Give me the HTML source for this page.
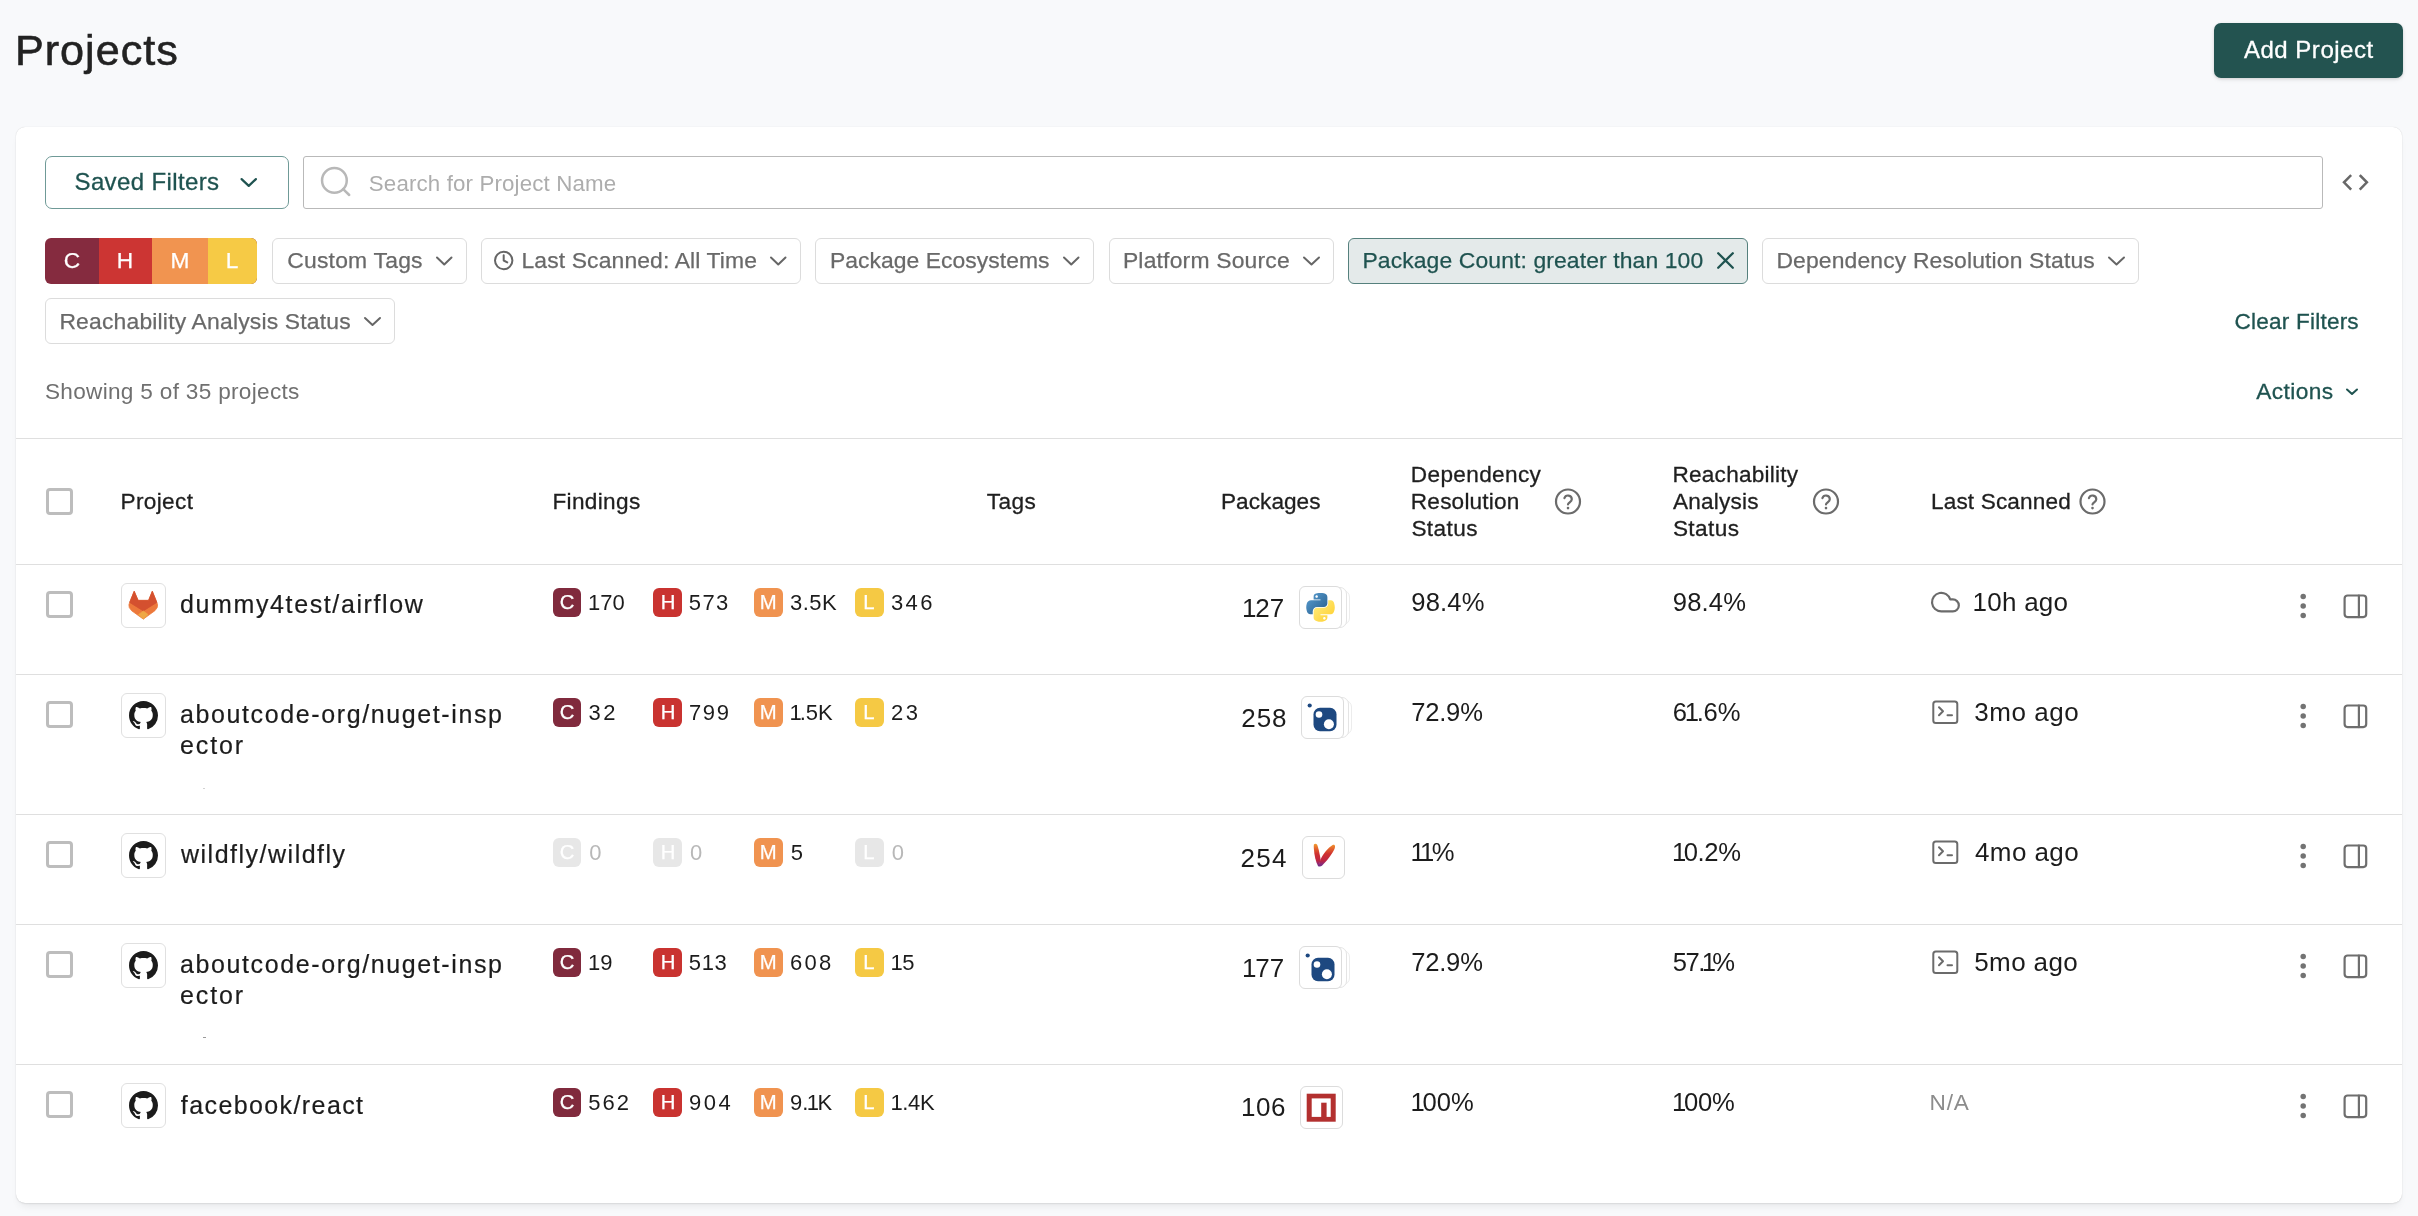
<!DOCTYPE html>
<html lang="en">
<head>
<meta charset="utf-8">
<title>Projects</title>
<style>
html,body{margin:0;padding:0;background:#f8f9fb;}
body{width:2418px;height:1216px;overflow:hidden;position:relative;font-family:"Liberation Sans",sans-serif;}
#root{position:absolute;left:0;top:0;width:2418px;height:1216px;overflow:hidden;background:#f8f9fb;will-change:transform;}
#root div,#root span,#root svg.a{position:absolute;}
.t{white-space:pre;font-family:"Liberation Sans",sans-serif;font-weight:400;}
#root .t span{position:static;}
.chip{box-sizing:border-box;border:1px solid #dcdcdc;border-radius:6px;background:#fff;top:238px;height:46px;}
.line{left:16px;width:2386px;height:1px;background:#dfdfdf;}
</style>
</head>
<body>
<div id="root">
<!-- card -->
<div style="left:16px;top:127px;width:2386px;height:1076px;background:#fff;border-radius:9px;box-shadow:0 0 1px rgba(0,0,0,0.18),0 1px 2px rgba(0,0,0,0.06),0 6px 10px -4px rgba(0,0,0,0.09)"></div>
<!-- add project -->
<div style="left:2214px;top:23px;width:189px;height:55px;background:#235350;border-radius:7px;box-shadow:0 1px 3px rgba(0,0,0,0.12),0 2px 5px rgba(0,0,0,0.06)"></div>
<!-- saved filters -->
<div style="left:45px;top:156px;width:244px;height:53px;box-sizing:border-box;border:1px solid #6f9a97;border-radius:7px;background:#fff"></div>
<!-- search -->
<div style="left:303px;top:156px;width:2020px;height:53px;box-sizing:border-box;border:1px solid #b9b9b9;border-radius:3px;background:#fff"></div>
<svg class="a" style="left:318px;top:164px" width="36" height="36" viewBox="0 0 36 36"><g fill="none" stroke="#b8b8b8" stroke-width="2.5" stroke-linecap="round"><circle cx="16.4" cy="16.4" r="12.35"/><path d="M25.2 25.2l6 5.8"/></g></svg>
<!-- code icon -->
<svg class="a" style="left:2340px;top:170px" width="32" height="26" viewBox="0 0 32 26"><g fill="none" stroke="#686868" stroke-width="2.5" stroke-linecap="square" stroke-linejoin="miter"><path d="M10.3 5.9L4 12.3L10.3 18.8"/><path d="M20.6 5.9L26.9 12.3L20.6 18.8"/></g></svg>
<!-- severity filter -->
<div style="left:45px;top:238px;width:212px;height:46px;border-radius:6px;overflow:hidden;background:#852b3f">
<div style="left:54px;top:0;width:53px;height:46px;background:#cc3533"></div>
<div style="left:107px;top:0;width:56px;height:46px;background:#f19450"></div>
<div style="left:163px;top:0;width:49px;height:46px;background:#f6ca45"></div>
</div>
<!-- chips -->
<div class="chip" style="left:272px;width:195px"></div>
<div class="chip" style="left:481px;width:320px"></div>
<div class="chip" style="left:815px;width:279px"></div>
<div class="chip" style="left:1109px;width:225px"></div>
<div class="chip" style="left:1348px;width:400px;background:#e4eaea;border-color:#55807d"></div>
<div class="chip" style="left:1762px;width:377px"></div>
<div class="chip" style="left:45px;top:298px;width:350px"></div>
<!--CHEVRONS-->
<!-- lines -->
<div class="line" style="top:438px"></div>
<div class="line" style="top:564px"></div>
<div class="line" style="top:674px"></div>
<div class="line" style="top:814px"></div>
<div class="line" style="top:924px"></div>
<div class="line" style="top:1064px"></div>
<!-- header checkbox -->
<div style="left:46px;top:487.5px;width:27px;height:27px;border:3px solid #bdbdbd;border-radius:4px;box-sizing:border-box;background:#fff"></div>
<div style="left:203px;top:788px;width:2px;height:1px;background:#d2d2d2"></div>
<div style="left:203px;top:1037px;width:3px;height:1px;background:#9a9a9a"></div>
<div style="left:46px;top:590.5px;width:27px;height:27px;border:3px solid #bdbdbd;border-radius:4px;box-sizing:border-box;background:#fff"></div>
<div style="left:121px;top:583.0px;width:45px;height:45px;border:1px solid #e0e0e0;border-radius:6px;box-sizing:border-box;background:#fff"><svg style="position:absolute;left:-1px;top:-1px" width="45" height="45" viewBox="0 0 45 45"><polygon fill="#ec783b" stroke="#ec783b" stroke-width="0.8" stroke-linejoin="round" points="13.2,8.3 17.1,17.4 27.6,17.4 31.3,8.3 35.8,19.4 36.6,21.8 36.2,24.6 33.9,27.7 22.3,36.1 10.6,27.7 8.3,24.6 7.9,21.8 8.7,19.4"/><polygon fill="#d4502f" stroke="#d4502f" stroke-width="0.8" stroke-linejoin="round" points="13.2,8.3 17.1,17.4 27.6,17.4 31.3,8.3 35.8,19.4 22.3,27.9 8.7,19.4"/><polygon fill="#efa844" stroke="#efa844" stroke-width="0.6" stroke-linejoin="round" points="22.3,27.9 27.1,31.6 22.3,36.1 17.5,31.6"/></svg></div>
<div style="left:553px;top:588.0px;width:28px;height:29px;background:#802a3d;border-radius:6px"></div>
<div style="left:653px;top:588.0px;width:28.5px;height:29px;background:#c93330;border-radius:6px"></div>
<div style="left:754px;top:588.0px;width:28.5px;height:29px;background:#f09350;border-radius:6px"></div>
<div style="left:855px;top:588.0px;width:28.5px;height:29px;background:#f5c944;border-radius:6px"></div>
<div style="left:1308px;top:590px;width:42px;height:35px;border:1px solid #ececec;border-radius:7px;box-sizing:border-box;background:#fff"></div>
<div style="left:1304px;top:587px;width:43px;height:41px;border:1px solid #e4e4e4;border-radius:7px;box-sizing:border-box;background:#fff"></div>
<div style="left:1299px;top:586px;width:43px;height:43px;border:1px solid #dcdcdc;border-radius:6px;box-sizing:border-box;background:#fff"><svg style="position:absolute;left:5.5px;top:5.5px" width="29" height="29" viewBox="0 0 111 113"><defs><linearGradient id="pyb" x1="0" y1="0" x2="0.8" y2="0.8"><stop offset="0" stop-color="#5a9fd4"/><stop offset="1" stop-color="#306998"/></linearGradient><linearGradient id="pyy" x1="0.8" y1="0.8" x2="0.2" y2="0.2"><stop offset="0" stop-color="#ffd43b"/><stop offset="1" stop-color="#ffe873"/></linearGradient></defs><path fill="url(#pyb)" fill-rule="evenodd" d="M54.9 0.1C50.3 0.1 45.9 0.5 42.1 1.2C30.8 3.2 28.7 7.4 28.7 15.1V25.3H55.5V28.7H28.7H18.6C10.8 28.7 4 33.4 1.9 42.3C-0.6 52.5-0.7 58.9 1.9 69.6C3.8 77.5 8.3 83.2 16.1 83.2H25.3V70.9C25.3 62.1 32.9 54.3 42.1 54.3H68.8C76.3 54.3 82.3 48.1 82.3 40.6V15.1C82.3 7.9 76.2 2.4 68.8 1.2C64.2 0.4 59.4 0.1 54.9 0.1ZM40.4 8.3C43.2 8.3 45.4 10.6 45.4 13.4C45.4 16.2 43.2 18.4 40.4 18.4C37.6 18.4 35.4 16.2 35.4 13.4C35.4 10.6 37.6 8.3 40.4 8.3Z"/><path fill="url(#pyy)" fill-rule="evenodd" d="M85.6 28.7V40.6C85.6 49.9 77.8 57.7 68.8 57.7H42.1C34.8 57.7 28.7 64 28.7 71.3V96.8C28.7 104.1 35 108.3 42.1 110.4C50.6 112.9 58.7 113.4 68.8 110.4C75.6 108.5 82.3 104.5 82.3 96.8V86.6H55.5V83.2H82.3H95.7C103.5 83.2 106.4 77.8 109.1 69.6C111.9 61.2 111.8 53.1 109.1 42.3C107.2 34.6 103.5 28.7 95.7 28.7H85.6ZM70.6 93.4C73.4 93.4 75.6 95.7 75.6 98.5C75.6 101.3 73.4 103.6 70.6 103.6C67.8 103.6 65.6 101.3 65.6 98.5C65.6 95.7 67.8 93.4 70.6 93.4Z"/></svg></div>
<div style="left:1930px;top:589.0px;width:30px;height:30px"><svg style="position:absolute;left:0;top:0" width="30" height="30" viewBox="0 0 30 30"><path fill="none" stroke="#6b6b6b" stroke-width="2.2" stroke-linecap="round" stroke-linejoin="round" d="M23.3 25.3H12a9.3 9.3 0 1 1 8.92-11.97h2.38a5.99 5.99 0 1 1 0 11.97Z" transform="translate(-0.7,-2.9)"/></svg></div>
<svg class="a" style="left:2298px;top:592.0px" width="10" height="30" viewBox="0 0 10 30"><g fill="#737373"><circle cx="5.2" cy="4.6" r="2.75"/><circle cx="5.2" cy="14.05" r="2.75"/><circle cx="5.2" cy="23.6" r="2.75"/></g></svg>
<div style="left:2341px;top:592.0px;width:30px;height:30px"><svg style="position:absolute;left:0;top:0" width="30" height="30" viewBox="0 0 30 30"><g fill="none" stroke="#6e6e6e" stroke-width="2.2" stroke-linecap="round" stroke-linejoin="round"><rect x="3.6" y="3.5" width="21.6" height="21.6" rx="3"/><path d="M17.9 3.5v21.6"/></g></svg></div>
<div style="left:46px;top:700.5px;width:27px;height:27px;border:3px solid #bdbdbd;border-radius:4px;box-sizing:border-box;background:#fff"></div>
<div style="left:121px;top:693.0px;width:45px;height:45px;border:1px solid #e0e0e0;border-radius:6px;box-sizing:border-box;background:#fff"><svg style="position:absolute;left:7px;top:7px" width="29" height="29" viewBox="0 0 16 16"><path fill="#1b1b1b" d="M8 0C3.58 0 0 3.58 0 8c0 3.54 2.29 6.53 5.47 7.59.4.07.55-.17.55-.38 0-.19-.01-.82-.01-1.49-2.01.37-2.53-.49-2.69-.94-.09-.23-.48-.94-.82-1.13-.28-.15-.68-.52-.01-.53.63-.01 1.08.58 1.23.82.72 1.21 1.87.87 2.33.66.07-.52.28-.87.51-1.07-1.78-.2-3.64-.89-3.64-3.95 0-.87.31-1.59.82-2.15-.08-.2-.36-1.02.08-2.12 0 0 .67-.21 2.2.82.64-.18 1.32-.27 2-.27.68 0 1.36.09 2 .27 1.53-1.04 2.2-.82 2.2-.82.44 1.1.16 1.92.08 2.12.51.56.82 1.27.82 2.15 0 3.07-1.87 3.75-3.65 3.95.29.25.54.73.54 1.48 0 1.07-.01 1.93-.01 2.2 0 .21.15.46.55.38A8.013 8.013 0 0016 8c0-4.42-3.58-8-8-8z"/></svg></div>
<div style="left:553px;top:698.0px;width:28px;height:29px;background:#802a3d;border-radius:6px"></div>
<div style="left:653px;top:698.0px;width:28.5px;height:29px;background:#c93330;border-radius:6px"></div>
<div style="left:754px;top:698.0px;width:28.5px;height:29px;background:#f09350;border-radius:6px"></div>
<div style="left:855px;top:698.0px;width:28.5px;height:29px;background:#f5c944;border-radius:6px"></div>
<div style="left:1310px;top:700px;width:42px;height:35px;border:1px solid #ececec;border-radius:7px;box-sizing:border-box;background:#fff"></div>
<div style="left:1306px;top:697px;width:43px;height:41px;border:1px solid #e4e4e4;border-radius:7px;box-sizing:border-box;background:#fff"></div>
<div style="left:1301px;top:696px;width:43px;height:43px;border:1px solid #dcdcdc;border-radius:6px;box-sizing:border-box;background:#fff"><svg style="position:absolute;left:-1px;top:-1px" width="42" height="42" viewBox="0 0 42 42"><circle cx="8.7" cy="9.5" r="2.1" fill="#1d4880"/><rect x="12.5" y="11.8" width="23" height="23.4" rx="6.5" fill="#1d4880"/><circle cx="18" cy="18.5" r="3.3" fill="#fff"/><circle cx="27.9" cy="28.2" r="5" fill="#fff"/></svg></div>
<div style="left:1930px;top:699.0px;width:30px;height:30px"><svg style="position:absolute;left:0;top:0" width="30" height="30" viewBox="0 0 30 30"><g fill="none" stroke="#6b6b6b" stroke-width="2" stroke-linecap="round" stroke-linejoin="round"><rect x="3.3" y="2.4" width="24" height="21.6" rx="2.5"/><path d="M9 8.3l4 4-4 4M17.5 16.2h4.5"/></g></svg></div>
<svg class="a" style="left:2298px;top:702.0px" width="10" height="30" viewBox="0 0 10 30"><g fill="#737373"><circle cx="5.2" cy="4.6" r="2.75"/><circle cx="5.2" cy="14.05" r="2.75"/><circle cx="5.2" cy="23.6" r="2.75"/></g></svg>
<div style="left:2341px;top:702.0px;width:30px;height:30px"><svg style="position:absolute;left:0;top:0" width="30" height="30" viewBox="0 0 30 30"><g fill="none" stroke="#6e6e6e" stroke-width="2.2" stroke-linecap="round" stroke-linejoin="round"><rect x="3.6" y="3.5" width="21.6" height="21.6" rx="3"/><path d="M17.9 3.5v21.6"/></g></svg></div>
<div style="left:46px;top:840.5px;width:27px;height:27px;border:3px solid #bdbdbd;border-radius:4px;box-sizing:border-box;background:#fff"></div>
<div style="left:121px;top:833.0px;width:45px;height:45px;border:1px solid #e0e0e0;border-radius:6px;box-sizing:border-box;background:#fff"><svg style="position:absolute;left:7px;top:7px" width="29" height="29" viewBox="0 0 16 16"><path fill="#1b1b1b" d="M8 0C3.58 0 0 3.58 0 8c0 3.54 2.29 6.53 5.47 7.59.4.07.55-.17.55-.38 0-.19-.01-.82-.01-1.49-2.01.37-2.53-.49-2.69-.94-.09-.23-.48-.94-.82-1.13-.28-.15-.68-.52-.01-.53.63-.01 1.08.58 1.23.82.72 1.21 1.87.87 2.33.66.07-.52.28-.87.51-1.07-1.78-.2-3.64-.89-3.64-3.95 0-.87.31-1.59.82-2.15-.08-.2-.36-1.02.08-2.12 0 0 .67-.21 2.2.82.64-.18 1.32-.27 2-.27.68 0 1.36.09 2 .27 1.53-1.04 2.2-.82 2.2-.82.44 1.1.16 1.92.08 2.12.51.56.82 1.27.82 2.15 0 3.07-1.87 3.75-3.65 3.95.29.25.54.73.54 1.48 0 1.07-.01 1.93-.01 2.2 0 .21.15.46.55.38A8.013 8.013 0 0016 8c0-4.42-3.58-8-8-8z"/></svg></div>
<div style="left:553px;top:838.0px;width:28px;height:29px;background:#e7e7e7;border-radius:6px"></div>
<div style="left:653px;top:838.0px;width:28.5px;height:29px;background:#e7e7e7;border-radius:6px"></div>
<div style="left:754px;top:838.0px;width:28.5px;height:29px;background:#f09350;border-radius:6px"></div>
<div style="left:855px;top:838.0px;width:28.5px;height:29px;background:#e7e7e7;border-radius:6px"></div>
<div style="left:1302px;top:836px;width:43px;height:43px;border:1px solid #dcdcdc;border-radius:6px;box-sizing:border-box;background:#fff"><svg style="position:absolute;left:-1px;top:-1px" width="43" height="43" viewBox="0 0 43 43"><defs><linearGradient id="mv" gradientUnits="userSpaceOnUse" x1="0" y1="7.5" x2="0" y2="30.5"><stop offset="0" stop-color="#f2a02e"/><stop offset="0.22" stop-color="#e3642c"/><stop offset="0.45" stop-color="#cf3230"/><stop offset="0.75" stop-color="#bd2544"/><stop offset="0.9" stop-color="#8a2a7a"/><stop offset="1" stop-color="#6a2a86"/></linearGradient></defs><path fill="url(#mv)" d="M12.1 8.2C13 7.3 14.4 7.5 15 8.6C16.2 11 17.4 16.5 18.6 23.5L17 30.3C16.7 30.6 16.3 30.5 16 30.1C13.8 26 12.3 19.5 11.8 12C11.7 10.3 11.7 8.8 12.1 8.2Z"/><path fill="url(#mv)" d="M30.6 9C31.6 8.4 32.8 8.8 33 10C33.2 11.3 32.6 13 31.6 14.8C29.2 19.2 24.5 25.6 20.2 29.4C19 30.5 17.6 30.8 16.9 30.2C16.7 28.4 17.5 25.8 18.8 23C21.2 17.8 26.2 11.6 30.6 9Z"/></svg></div>
<div style="left:1930px;top:839.0px;width:30px;height:30px"><svg style="position:absolute;left:0;top:0" width="30" height="30" viewBox="0 0 30 30"><g fill="none" stroke="#6b6b6b" stroke-width="2" stroke-linecap="round" stroke-linejoin="round"><rect x="3.3" y="2.4" width="24" height="21.6" rx="2.5"/><path d="M9 8.3l4 4-4 4M17.5 16.2h4.5"/></g></svg></div>
<svg class="a" style="left:2298px;top:842.0px" width="10" height="30" viewBox="0 0 10 30"><g fill="#737373"><circle cx="5.2" cy="4.6" r="2.75"/><circle cx="5.2" cy="14.05" r="2.75"/><circle cx="5.2" cy="23.6" r="2.75"/></g></svg>
<div style="left:2341px;top:842.0px;width:30px;height:30px"><svg style="position:absolute;left:0;top:0" width="30" height="30" viewBox="0 0 30 30"><g fill="none" stroke="#6e6e6e" stroke-width="2.2" stroke-linecap="round" stroke-linejoin="round"><rect x="3.6" y="3.5" width="21.6" height="21.6" rx="3"/><path d="M17.9 3.5v21.6"/></g></svg></div>
<div style="left:46px;top:950.5px;width:27px;height:27px;border:3px solid #bdbdbd;border-radius:4px;box-sizing:border-box;background:#fff"></div>
<div style="left:121px;top:943.0px;width:45px;height:45px;border:1px solid #e0e0e0;border-radius:6px;box-sizing:border-box;background:#fff"><svg style="position:absolute;left:7px;top:7px" width="29" height="29" viewBox="0 0 16 16"><path fill="#1b1b1b" d="M8 0C3.58 0 0 3.58 0 8c0 3.54 2.29 6.53 5.47 7.59.4.07.55-.17.55-.38 0-.19-.01-.82-.01-1.49-2.01.37-2.53-.49-2.69-.94-.09-.23-.48-.94-.82-1.13-.28-.15-.68-.52-.01-.53.63-.01 1.08.58 1.23.82.72 1.21 1.87.87 2.33.66.07-.52.28-.87.51-1.07-1.78-.2-3.64-.89-3.64-3.95 0-.87.31-1.59.82-2.15-.08-.2-.36-1.02.08-2.12 0 0 .67-.21 2.2.82.64-.18 1.32-.27 2-.27.68 0 1.36.09 2 .27 1.53-1.04 2.2-.82 2.2-.82.44 1.1.16 1.92.08 2.12.51.56.82 1.27.82 2.15 0 3.07-1.87 3.75-3.65 3.95.29.25.54.73.54 1.48 0 1.07-.01 1.93-.01 2.2 0 .21.15.46.55.38A8.013 8.013 0 0016 8c0-4.42-3.58-8-8-8z"/></svg></div>
<div style="left:553px;top:948.0px;width:28px;height:29px;background:#802a3d;border-radius:6px"></div>
<div style="left:653px;top:948.0px;width:28.5px;height:29px;background:#c93330;border-radius:6px"></div>
<div style="left:754px;top:948.0px;width:28.5px;height:29px;background:#f09350;border-radius:6px"></div>
<div style="left:855px;top:948.0px;width:28.5px;height:29px;background:#f5c944;border-radius:6px"></div>
<div style="left:1308px;top:950px;width:42px;height:35px;border:1px solid #ececec;border-radius:7px;box-sizing:border-box;background:#fff"></div>
<div style="left:1304px;top:947px;width:43px;height:41px;border:1px solid #e4e4e4;border-radius:7px;box-sizing:border-box;background:#fff"></div>
<div style="left:1299px;top:946px;width:43px;height:43px;border:1px solid #dcdcdc;border-radius:6px;box-sizing:border-box;background:#fff"><svg style="position:absolute;left:-1px;top:-1px" width="42" height="42" viewBox="0 0 42 42"><circle cx="8.7" cy="9.5" r="2.1" fill="#1d4880"/><rect x="12.5" y="11.8" width="23" height="23.4" rx="6.5" fill="#1d4880"/><circle cx="18" cy="18.5" r="3.3" fill="#fff"/><circle cx="27.9" cy="28.2" r="5" fill="#fff"/></svg></div>
<div style="left:1930px;top:949.0px;width:30px;height:30px"><svg style="position:absolute;left:0;top:0" width="30" height="30" viewBox="0 0 30 30"><g fill="none" stroke="#6b6b6b" stroke-width="2" stroke-linecap="round" stroke-linejoin="round"><rect x="3.3" y="2.4" width="24" height="21.6" rx="2.5"/><path d="M9 8.3l4 4-4 4M17.5 16.2h4.5"/></g></svg></div>
<svg class="a" style="left:2298px;top:952.0px" width="10" height="30" viewBox="0 0 10 30"><g fill="#737373"><circle cx="5.2" cy="4.6" r="2.75"/><circle cx="5.2" cy="14.05" r="2.75"/><circle cx="5.2" cy="23.6" r="2.75"/></g></svg>
<div style="left:2341px;top:952.0px;width:30px;height:30px"><svg style="position:absolute;left:0;top:0" width="30" height="30" viewBox="0 0 30 30"><g fill="none" stroke="#6e6e6e" stroke-width="2.2" stroke-linecap="round" stroke-linejoin="round"><rect x="3.6" y="3.5" width="21.6" height="21.6" rx="3"/><path d="M17.9 3.5v21.6"/></g></svg></div>
<div style="left:46px;top:1090.5px;width:27px;height:27px;border:3px solid #bdbdbd;border-radius:4px;box-sizing:border-box;background:#fff"></div>
<div style="left:121px;top:1083.0px;width:45px;height:45px;border:1px solid #e0e0e0;border-radius:6px;box-sizing:border-box;background:#fff"><svg style="position:absolute;left:7px;top:7px" width="29" height="29" viewBox="0 0 16 16"><path fill="#1b1b1b" d="M8 0C3.58 0 0 3.58 0 8c0 3.54 2.29 6.53 5.47 7.59.4.07.55-.17.55-.38 0-.19-.01-.82-.01-1.49-2.01.37-2.53-.49-2.69-.94-.09-.23-.48-.94-.82-1.13-.28-.15-.68-.52-.01-.53.63-.01 1.08.58 1.23.82.72 1.21 1.87.87 2.33.66.07-.52.28-.87.51-1.07-1.78-.2-3.64-.89-3.64-3.95 0-.87.31-1.59.82-2.15-.08-.2-.36-1.02.08-2.12 0 0 .67-.21 2.2.82.64-.18 1.32-.27 2-.27.68 0 1.36.09 2 .27 1.53-1.04 2.2-.82 2.2-.82.44 1.1.16 1.92.08 2.12.51.56.82 1.27.82 2.15 0 3.07-1.87 3.75-3.65 3.95.29.25.54.73.54 1.48 0 1.07-.01 1.93-.01 2.2 0 .21.15.46.55.38A8.013 8.013 0 0016 8c0-4.42-3.58-8-8-8z"/></svg></div>
<div style="left:553px;top:1088.0px;width:28px;height:29px;background:#802a3d;border-radius:6px"></div>
<div style="left:653px;top:1088.0px;width:28.5px;height:29px;background:#c93330;border-radius:6px"></div>
<div style="left:754px;top:1088.0px;width:28.5px;height:29px;background:#f09350;border-radius:6px"></div>
<div style="left:855px;top:1088.0px;width:28.5px;height:29px;background:#f5c944;border-radius:6px"></div>
<div style="left:1300px;top:1086px;width:43px;height:43px;border:1px solid #dcdcdc;border-radius:6px;box-sizing:border-box;background:#fff"><svg style="position:absolute;left:-1px;top:-1px" width="42.5" height="43.5" viewBox="0 0 42.5 43.5"><rect x="6.7" y="7.7" width="29" height="28" fill="#b3302f"/><rect x="11.7" y="12.4" width="19" height="18.5" fill="#fff"/><rect x="21.2" y="16.7" width="5.4" height="14.3" fill="#b3302f"/></svg></div>
<svg class="a" style="left:2298px;top:1092.0px" width="10" height="30" viewBox="0 0 10 30"><g fill="#737373"><circle cx="5.2" cy="4.6" r="2.75"/><circle cx="5.2" cy="14.05" r="2.75"/><circle cx="5.2" cy="23.6" r="2.75"/></g></svg>
<div style="left:2341px;top:1092.0px;width:30px;height:30px"><svg style="position:absolute;left:0;top:0" width="30" height="30" viewBox="0 0 30 30"><g fill="none" stroke="#6e6e6e" stroke-width="2.2" stroke-linecap="round" stroke-linejoin="round"><rect x="3.6" y="3.5" width="21.6" height="21.6" rx="3"/><path d="M17.9 3.5v21.6"/></g></svg></div>
<svg class="a" style="left:0;top:0" width="2418" height="1216" viewBox="0 0 2418 1216" fill="none" stroke-linecap="round" stroke-linejoin="round"><path d="M241.6 179.1L248.75 185.9L255.9 179.1" stroke="#1f5350" stroke-width="2.2"/><path d="M437.0 257.5L444.25 264.5L451.5 257.5" stroke="#666" stroke-width="2"/><path d="M771.0 257.5L778.25 264.5L785.5 257.5" stroke="#666" stroke-width="2"/><path d="M1064.0 257.5L1071.25 264.5L1078.5 257.5" stroke="#666" stroke-width="2"/><path d="M1304.0 257.5L1311.5 264.5L1319.0 257.5" stroke="#666" stroke-width="2"/><path d="M2109.0 257.5L2116.5 264.5L2124.0 257.5" stroke="#666" stroke-width="2"/><path d="M365.0 318.0L372.5 325.0L380.0 318.0" stroke="#666" stroke-width="2"/><path d="M2347.0 389.5L2352.0 394.0L2357.0 389.5" stroke="#1f5350" stroke-width="2"/><path d="M1718.2 253.2L1732.8 267.8M1732.8 253.2L1718.2 267.8" stroke="#1f5350" stroke-width="2.3"/><circle cx="503.7" cy="260.5" r="8.7" stroke="#666" stroke-width="2"/><path d="M503.7 255.3V260.5L507.3 262.4" stroke="#666" stroke-width="2"/><circle cx="1568" cy="501.5" r="12" stroke="#6b6b6b" stroke-width="2.2"/><path d="M1564.4 498.1a3.8 3.8 0 0 1 7.4 1.2c0 2.5-3.8 3.3-3.8 5.2" stroke="#6b6b6b" stroke-width="2.2"/><circle cx="1568" cy="508.1" r="1.3" fill="#6b6b6b"/><circle cx="1826" cy="501.5" r="12" stroke="#6b6b6b" stroke-width="2.2"/><path d="M1822.4 498.1a3.8 3.8 0 0 1 7.4 1.2c0 2.5-3.8 3.3-3.8 5.2" stroke="#6b6b6b" stroke-width="2.2"/><circle cx="1826" cy="508.1" r="1.3" fill="#6b6b6b"/><circle cx="2092.5" cy="501.5" r="12" stroke="#6b6b6b" stroke-width="2.2"/><path d="M2088.9 498.1a3.8 3.8 0 0 1 7.4 1.2c0 2.5-3.8 3.3-3.8 5.2" stroke="#6b6b6b" stroke-width="2.2"/><circle cx="2092.5" cy="508.1" r="1.3" fill="#6b6b6b"/></svg>
<span class="t" style="left:14.92px;top:29.00px;font-size:43.2px;line-height:43.2px;color:#222222;letter-spacing:0.982px;-webkit-text-stroke:0.55px #222222;">Projects</span>
<span class="t" style="left:2243.90px;top:38.00px;font-size:24px;line-height:24px;color:#ffffff;letter-spacing:0.520px;-webkit-text-stroke:0.3px #ffffff;">Add Project</span>
<span class="t" style="left:74.53px;top:170.00px;font-size:24px;line-height:24px;color:#1f5350;letter-spacing:0.371px;-webkit-text-stroke:0.3px #1f5350;">Saved Filters</span>
<span class="t" style="left:368.84px;top:173.00px;font-size:22.3px;line-height:22.3px;color:#adadad;letter-spacing:0.144px;">Search for Project Name</span>
<span class="t" style="left:63.66px;top:249.00px;font-size:22.7px;line-height:22.7px;color:#ffffff;-webkit-text-stroke:0.25px #ffffff;">C</span>
<span class="t" style="left:116.65px;top:249.00px;font-size:22.7px;line-height:22.7px;color:#ffffff;-webkit-text-stroke:0.25px #ffffff;">H</span>
<span class="t" style="left:170.56px;top:249.00px;font-size:22.7px;line-height:22.7px;color:#ffffff;-webkit-text-stroke:0.25px #ffffff;">M</span>
<span class="t" style="left:225.76px;top:249.00px;font-size:22.7px;line-height:22.7px;color:#ffffff;-webkit-text-stroke:0.25px #ffffff;">L</span>
<span class="t" style="left:287.20px;top:249.00px;font-size:22.9px;line-height:22.9px;color:#696969;letter-spacing:0.222px;-webkit-text-stroke:0.25px #696969;">Custom Tags</span>
<span class="t" style="left:521.41px;top:249.00px;font-size:22.9px;line-height:22.9px;color:#696969;letter-spacing:0.130px;-webkit-text-stroke:0.25px #696969;">Last Scanned: All Time</span>
<span class="t" style="left:829.91px;top:249.00px;font-size:22.9px;line-height:22.9px;color:#696969;letter-spacing:0.045px;-webkit-text-stroke:0.25px #696969;">Package Ecosystems</span>
<span class="t" style="left:1122.91px;top:249.00px;font-size:22.9px;line-height:22.9px;color:#696969;letter-spacing:0.192px;-webkit-text-stroke:0.25px #696969;">Platform Source</span>
<span class="t" style="left:1362.41px;top:249.00px;font-size:22.9px;line-height:22.9px;color:#1f5350;letter-spacing:0.117px;-webkit-text-stroke:0.25px #1f5350;">Package Count: greater than 100</span>
<span class="t" style="left:1776.41px;top:249.00px;font-size:22.9px;line-height:22.9px;color:#696969;letter-spacing:0.148px;-webkit-text-stroke:0.25px #696969;">Dependency Resolution Status</span>
<span class="t" style="left:59.41px;top:310.00px;font-size:22.9px;line-height:22.9px;color:#696969;letter-spacing:0.185px;-webkit-text-stroke:0.25px #696969;">Reachability Analysis Status</span>
<span class="t" style="left:2234.60px;top:311.00px;font-size:22.6px;line-height:22.6px;color:#1f5350;letter-spacing:0.192px;-webkit-text-stroke:0.3px #1f5350;">Clear Filters</span>
<span class="t" style="left:44.92px;top:381.00px;font-size:22.6px;line-height:22.6px;color:#707070;letter-spacing:0.307px;">Showing 5 of 35 projects</span>
<span class="t" style="left:2256.20px;top:380.00px;font-size:22.7px;line-height:22.7px;color:#1f5350;letter-spacing:0.407px;-webkit-text-stroke:0.3px #1f5350;">Actions</span>
<span class="t" style="left:120.47px;top:491.00px;font-size:22.6px;line-height:22.6px;color:#1f1f1f;letter-spacing:0.363px;-webkit-text-stroke:0.3px #1f1f1f;">Project</span>
<span class="t" style="left:552.47px;top:491.00px;font-size:22.6px;line-height:22.6px;color:#1f1f1f;letter-spacing:0.331px;-webkit-text-stroke:0.3px #1f1f1f;">Findings</span>
<span class="t" style="left:986.82px;top:491.00px;font-size:22.6px;line-height:22.6px;color:#1f1f1f;letter-spacing:0.394px;-webkit-text-stroke:0.3px #1f1f1f;">Tags</span>
<span class="t" style="left:1220.97px;top:491.00px;font-size:22.6px;line-height:22.6px;color:#1f1f1f;letter-spacing:0.045px;-webkit-text-stroke:0.3px #1f1f1f;">Packages</span>
<span class="t" style="left:1410.87px;top:464.00px;font-size:22.6px;line-height:22.6px;color:#1f1f1f;letter-spacing:0.352px;-webkit-text-stroke:0.3px #1f1f1f;">Dependency</span>
<span class="t" style="left:1410.87px;top:491.00px;font-size:22.6px;line-height:22.6px;color:#1f1f1f;letter-spacing:0.195px;-webkit-text-stroke:0.3px #1f1f1f;">Resolution</span>
<span class="t" style="left:1411.39px;top:518.00px;font-size:22.6px;line-height:22.6px;color:#1f1f1f;letter-spacing:0.399px;-webkit-text-stroke:0.3px #1f1f1f;">Status</span>
<span class="t" style="left:1672.47px;top:464.00px;font-size:22.6px;line-height:22.6px;color:#1f1f1f;letter-spacing:0.230px;-webkit-text-stroke:0.3px #1f1f1f;">Reachability</span>
<span class="t" style="left:1673.00px;top:491.00px;font-size:22.6px;line-height:22.6px;color:#1f1f1f;letter-spacing:0.212px;-webkit-text-stroke:0.3px #1f1f1f;">Analysis</span>
<span class="t" style="left:1672.89px;top:518.00px;font-size:22.6px;line-height:22.6px;color:#1f1f1f;letter-spacing:0.399px;-webkit-text-stroke:0.3px #1f1f1f;">Status</span>
<span class="t" style="left:1930.97px;top:491.00px;font-size:22.6px;line-height:22.6px;color:#1f1f1f;letter-spacing:0.150px;-webkit-text-stroke:0.3px #1f1f1f;">Last Scanned</span>
<span class="t" style="left:180.00px;top:592.00px;font-size:25px;line-height:25px;color:#1c1c1c;letter-spacing:1.618px;-webkit-text-stroke:0.2px #1c1c1c;">dummy4test/airflow</span>
<span class="t" style="left:559.66px;top:592.00px;font-size:20.3px;line-height:20.3px;color:#ffffff;-webkit-text-stroke:0.25px #ffffff;">C</span>
<span class="t" style="left:587.89px;top:592.00px;font-size:22px;line-height:22px;color:#1c1c1c;letter-spacing:0.068px;">170</span>
<span class="t" style="left:660.77px;top:592.00px;font-size:20.3px;line-height:20.3px;color:#ffffff;-webkit-text-stroke:0.25px #ffffff;">H</span>
<span class="t" style="left:688.84px;top:592.00px;font-size:22px;line-height:22px;color:#1c1c1c;letter-spacing:1.410px;">573</span>
<span class="t" style="left:759.81px;top:592.00px;font-size:20.3px;line-height:20.3px;color:#ffffff;-webkit-text-stroke:0.25px #ffffff;">M</span>
<span class="t" style="left:790.00px;top:592.00px;font-size:22px;line-height:22px;color:#1c1c1c;letter-spacing:0.474px;">3.5K</span>
<span class="t" style="left:863.15px;top:592.00px;font-size:20.3px;line-height:20.3px;color:#ffffff;-webkit-text-stroke:0.25px #ffffff;">L</span>
<span class="t" style="left:891.00px;top:592.00px;font-size:22px;line-height:22px;color:#1c1c1c;letter-spacing:2.336px;">346</span>
<span class="t" style="left:1243.40px;top:595.00px;font-size:26px;line-height:26px;color:#1c1c1c;letter-spacing:0.000px;"><span style="margin:0 -1.30px">1</span>27</span>
<span class="t" style="left:1411.25px;top:590.00px;font-size:25.6px;line-height:25.6px;color:#1c1c1c;letter-spacing:0.146px;">98.4%</span>
<span class="t" style="left:1672.85px;top:590.00px;font-size:25.6px;line-height:25.6px;color:#1c1c1c;letter-spacing:0.121px;">98.4%</span>
<span class="t" style="left:1972.50px;top:589.00px;font-size:26px;line-height:26px;color:#1c1c1c;letter-spacing:0.258px;">10h ago</span>
<span class="t" style="left:180.00px;top:702.00px;font-size:25px;line-height:25px;color:#1c1c1c;letter-spacing:1.609px;-webkit-text-stroke:0.2px #1c1c1c;">aboutcode-org/nuget-insp</span>
<span class="t" style="left:180.00px;top:733.00px;font-size:25px;line-height:25px;color:#1c1c1c;letter-spacing:1.905px;-webkit-text-stroke:0.2px #1c1c1c;">ector</span>
<span class="t" style="left:559.66px;top:702.00px;font-size:20.3px;line-height:20.3px;color:#ffffff;-webkit-text-stroke:0.25px #ffffff;">C</span>
<span class="t" style="left:588.50px;top:702.00px;font-size:22px;line-height:22px;color:#1c1c1c;letter-spacing:2.553px;">32</span>
<span class="t" style="left:660.77px;top:702.00px;font-size:20.3px;line-height:20.3px;color:#ffffff;-webkit-text-stroke:0.25px #ffffff;">H</span>
<span class="t" style="left:689.00px;top:702.00px;font-size:22px;line-height:22px;color:#1c1c1c;letter-spacing:1.619px;">799</span>
<span class="t" style="left:759.81px;top:702.00px;font-size:20.3px;line-height:20.3px;color:#ffffff;-webkit-text-stroke:0.25px #ffffff;">M</span>
<span class="t" style="left:791.26px;top:702.00px;font-size:22px;line-height:22px;color:#1c1c1c;letter-spacing:-0.033px;"><span style="margin:0 -1.87px">1</span>.5K</span>
<span class="t" style="left:863.15px;top:702.00px;font-size:20.3px;line-height:20.3px;color:#ffffff;-webkit-text-stroke:0.25px #ffffff;">L</span>
<span class="t" style="left:891.00px;top:702.00px;font-size:22px;line-height:22px;color:#1c1c1c;letter-spacing:2.449px;">23</span>
<span class="t" style="left:1241.30px;top:705.00px;font-size:26px;line-height:26px;color:#1c1c1c;letter-spacing:0.935px;">258</span>
<span class="t" style="left:1411.20px;top:700.00px;font-size:25.6px;line-height:25.6px;color:#1c1c1c;letter-spacing:-0.217px;">72.9%</span>
<span class="t" style="left:1672.79px;top:700.00px;font-size:25.6px;line-height:25.6px;color:#1c1c1c;letter-spacing:-0.151px;">6<span style="margin:0 -2.18px">1</span>.6%</span>
<span class="t" style="left:1974.36px;top:699.00px;font-size:26px;line-height:26px;color:#1c1c1c;letter-spacing:0.523px;">3mo ago</span>
<span class="t" style="left:181.00px;top:842.00px;font-size:25px;line-height:25px;color:#1c1c1c;letter-spacing:1.502px;-webkit-text-stroke:0.2px #1c1c1c;">wildfly/wildfly</span>
<span class="t" style="left:559.66px;top:842.00px;font-size:20.3px;line-height:20.3px;color:#ffffff;-webkit-text-stroke:0.25px #ffffff;">C</span>
<span class="t" style="left:589.30px;top:842.00px;font-size:22px;line-height:22px;color:#b8b8b8;">0</span>
<span class="t" style="left:660.77px;top:842.00px;font-size:20.3px;line-height:20.3px;color:#ffffff;-webkit-text-stroke:0.25px #ffffff;">H</span>
<span class="t" style="left:690.05px;top:842.00px;font-size:22px;line-height:22px;color:#b8b8b8;">0</span>
<span class="t" style="left:759.81px;top:842.00px;font-size:20.3px;line-height:20.3px;color:#ffffff;-webkit-text-stroke:0.25px #ffffff;">M</span>
<span class="t" style="left:790.77px;top:842.00px;font-size:22px;line-height:22px;color:#1c1c1c;">5</span>
<span class="t" style="left:863.15px;top:842.00px;font-size:20.3px;line-height:20.3px;color:#ffffff;-webkit-text-stroke:0.25px #ffffff;">L</span>
<span class="t" style="left:891.80px;top:842.00px;font-size:22px;line-height:22px;color:#b8b8b8;">0</span>
<span class="t" style="left:1240.50px;top:845.00px;font-size:26px;line-height:26px;color:#1c1c1c;letter-spacing:1.236px;">254</span>
<span class="t" style="left:1412.58px;top:840.00px;font-size:25.6px;line-height:25.6px;color:#1c1c1c;letter-spacing:-0.372px;"><span style="margin:0 -2.18px">1</span><span style="margin:0 -2.18px">1</span>%</span>
<span class="t" style="left:1674.18px;top:840.00px;font-size:25.6px;line-height:25.6px;color:#1c1c1c;letter-spacing:-0.372px;"><span style="margin:0 -2.18px">1</span>0.2%</span>
<span class="t" style="left:1974.98px;top:839.00px;font-size:26px;line-height:26px;color:#1c1c1c;letter-spacing:0.420px;">4mo ago</span>
<span class="t" style="left:180.00px;top:952.00px;font-size:25px;line-height:25px;color:#1c1c1c;letter-spacing:1.609px;-webkit-text-stroke:0.2px #1c1c1c;">aboutcode-org/nuget-insp</span>
<span class="t" style="left:180.00px;top:983.00px;font-size:25px;line-height:25px;color:#1c1c1c;letter-spacing:1.905px;-webkit-text-stroke:0.2px #1c1c1c;">ector</span>
<span class="t" style="left:559.66px;top:952.00px;font-size:20.3px;line-height:20.3px;color:#ffffff;-webkit-text-stroke:0.25px #ffffff;">C</span>
<span class="t" style="left:587.89px;top:952.00px;font-size:22px;line-height:22px;color:#1c1c1c;letter-spacing:0.139px;">19</span>
<span class="t" style="left:660.77px;top:952.00px;font-size:20.3px;line-height:20.3px;color:#ffffff;-webkit-text-stroke:0.25px #ffffff;">H</span>
<span class="t" style="left:688.84px;top:952.00px;font-size:22px;line-height:22px;color:#1c1c1c;letter-spacing:0.660px;">513</span>
<span class="t" style="left:759.81px;top:952.00px;font-size:20.3px;line-height:20.3px;color:#ffffff;-webkit-text-stroke:0.25px #ffffff;">M</span>
<span class="t" style="left:789.97px;top:952.00px;font-size:22px;line-height:22px;color:#1c1c1c;letter-spacing:2.337px;">608</span>
<span class="t" style="left:863.15px;top:952.00px;font-size:20.3px;line-height:20.3px;color:#ffffff;-webkit-text-stroke:0.25px #ffffff;">L</span>
<span class="t" style="left:890.39px;top:952.00px;font-size:22px;line-height:22px;color:#1c1c1c;letter-spacing:-0.484px;">15</span>
<span class="t" style="left:1243.20px;top:955.00px;font-size:26px;line-height:26px;color:#1c1c1c;letter-spacing:0.000px;"><span style="margin:0 -1.20px">1</span>77</span>
<span class="t" style="left:1411.20px;top:950.00px;font-size:25.6px;line-height:25.6px;color:#1c1c1c;letter-spacing:-0.217px;">72.9%</span>
<span class="t" style="left:1672.79px;top:950.00px;font-size:25.6px;line-height:25.6px;color:#1c1c1c;letter-spacing:-1.526px;">57.<span style="margin:0 -2.18px">1</span>%</span>
<span class="t" style="left:1974.27px;top:949.00px;font-size:26px;line-height:26px;color:#1c1c1c;letter-spacing:0.372px;">5mo ago</span>
<span class="t" style="left:180.84px;top:1093.00px;font-size:25px;line-height:25px;color:#1c1c1c;letter-spacing:1.402px;-webkit-text-stroke:0.2px #1c1c1c;">facebook/react</span>
<span class="t" style="left:559.66px;top:1092.00px;font-size:20.3px;line-height:20.3px;color:#ffffff;-webkit-text-stroke:0.25px #ffffff;">C</span>
<span class="t" style="left:588.34px;top:1092.00px;font-size:22px;line-height:22px;color:#1c1c1c;letter-spacing:1.962px;">562</span>
<span class="t" style="left:660.77px;top:1092.00px;font-size:20.3px;line-height:20.3px;color:#ffffff;-webkit-text-stroke:0.25px #ffffff;">H</span>
<span class="t" style="left:689.00px;top:1092.00px;font-size:22px;line-height:22px;color:#1c1c1c;letter-spacing:2.500px;">904</span>
<span class="t" style="left:759.81px;top:1092.00px;font-size:20.3px;line-height:20.3px;color:#ffffff;-webkit-text-stroke:0.25px #ffffff;">M</span>
<span class="t" style="left:790.00px;top:1092.00px;font-size:22px;line-height:22px;color:#1c1c1c;letter-spacing:0.000px;">9.<span style="margin:0 -1.54px">1</span>K</span>
<span class="t" style="left:863.15px;top:1092.00px;font-size:20.3px;line-height:20.3px;color:#ffffff;-webkit-text-stroke:0.25px #ffffff;">L</span>
<span class="t" style="left:890.39px;top:1092.00px;font-size:22px;line-height:22px;color:#1c1c1c;letter-spacing:-0.323px;">1.4K</span>
<span class="t" style="left:1241.00px;top:1094.00px;font-size:26px;line-height:26px;color:#1c1c1c;letter-spacing:0.500px;">106</span>
<span class="t" style="left:1412.46px;top:1090.00px;font-size:25.6px;line-height:25.6px;color:#1c1c1c;letter-spacing:0.000px;"><span style="margin:0 -2.06px">1</span>00%</span>
<span class="t" style="left:1674.18px;top:1090.00px;font-size:25.6px;line-height:25.6px;color:#1c1c1c;letter-spacing:-0.163px;"><span style="margin:0 -2.18px">1</span>00%</span>
<span class="t" style="left:1929.50px;top:1092.00px;font-size:22.6px;line-height:22.6px;color:#8c8c8c;letter-spacing:0.809px;">N/A</span>
</div>
</body>
</html>
